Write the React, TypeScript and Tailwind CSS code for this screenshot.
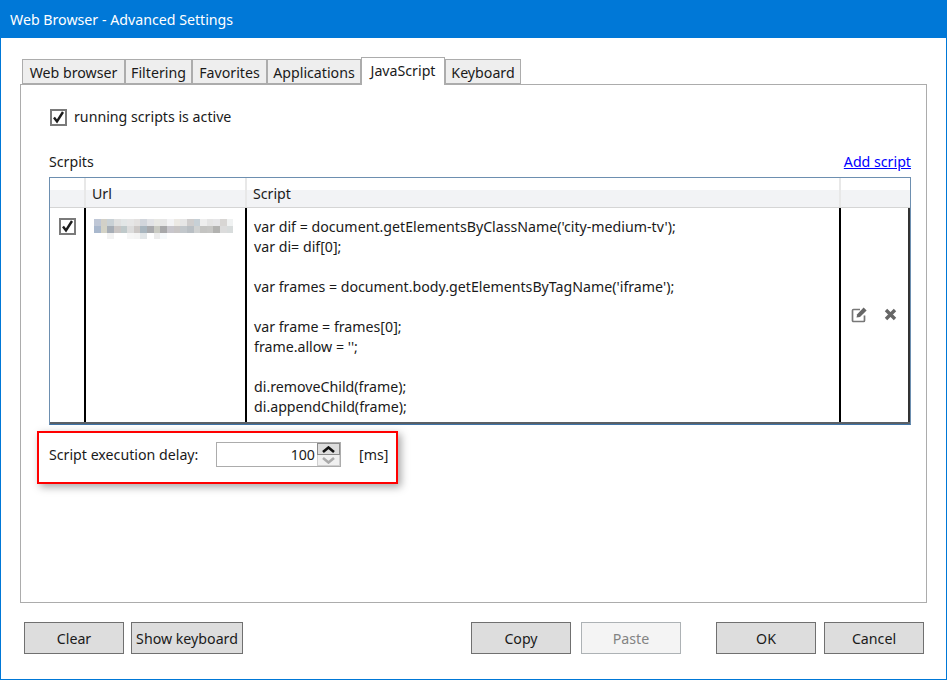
const F = "font-['Noto_Sans','Open_Sans',sans-serif]";

function Check() {
  return (
    <span className="flex h-[17px] w-[17px] items-center justify-center border-2 border-[#7a7a7a] bg-white">
      <svg width="13" height="13" viewBox="0 0 13 13" className="overflow-visible">
        <path d="M2 6.5 L5 10.5 L11 1" fill="none" stroke="#1c1c1c" strokeWidth="2.4" />
      </svg>
    </span>
  );
}

function Tab({ label, w, active }: { label: string; w: string; active?: boolean }) {
  return active ? (
    <div className={`${w} z-10 -mb-px flex h-[28px] items-center justify-center border border-b-0 border-[#acacac] bg-white text-[#1a1a1a]`}>
      <span className="-mt-[1px]">{label}</span>
    </div>
  ) : (
    <div className={`${w} flex h-[25px] items-center justify-center border border-[#acacac] bg-[#eeeeee] pt-[2px] text-[#1a1a1a]`}>
      {label}
    </div>
  );
}

function Btn({ label, w, disabled }: { label: string; w: string; disabled?: boolean }) {
  return (
    <div
      className={`${w} flex h-[32px] items-center justify-center border pt-[2px] ${
        disabled ? "border-[#adb2b5] bg-[#f4f4f4] text-[#838383]" : "border-[#707070] bg-[#dddddd] text-[#1a1a1a]"
      }`}
    >
      {label}
    </div>
  );
}

const row1 = ["#bfc7d6","#d2d0c8","#c9d1d6","#dfe0e0","#e2e6e6","#e6e6e6","#e3e1e0","#d2d6dc","#e2e3e6","#e8e8e4","#e6e6e6","#f3f3f5","#ece9e4","#e6e6e6","#cfcdcd","#c7d0d6","#eeeeee","#e4e4e4","#e6e6e8","#d8d6d4","#f0f2f2","#ffffff"];
const row2 = ["#a9b8cd","#d3d2c6","#a6adb6","#c9c5c4","#bfc9ca","#dcdcdc","#ccc8c6","#a9b6bf","#a9aaad","#c9cac2","#a8a8aa","#c8c6cc","#c8c5c5","#c2c7cb","#b9bfc4","#d0d2d2","#c4c4c2","#c6c6c4","#b2b2b0","#dcdcdc","#d8dcdc","#ffffff"];
const row3 = ["#ffffff","#ffffff","#f2f2f2","#ffffff","#ffffff","#f6f6f6","#f4f4f4","#e2e6e8","#ffffff","#ececec","#f6f9fb","#ffffff","#ffffff","#ffffff","#ffffff","#ffffff","#ffffff","#ffffff","#ffffff","#ffffff","#ffffff","#ffffff"];

export default function App() {
  return (
    <div className={`${F} flex h-[680px] w-[947px] flex-col border-x border-b border-[#0078d7] bg-white text-[14.2px] leading-[20px] text-[#1a1a1a]`}>
      <div className="-mx-px flex h-[38px] shrink-0 items-center bg-[#0078d7] pl-[10px] pt-[2px] text-white">
        Web Browser - Advanced Settings
      </div>

      <div className="flex flex-col px-[19px] pt-[19px]">
        <div className="flex items-end pl-[2px]">
          <Tab label="Web browser" w="w-[103px]" />
          <Tab label="Filtering" w="w-[67px]" />
          <Tab label="Favorites" w="w-[75px]" />
          <Tab label="Applications" w="w-[94px]" />
          <Tab label="JavaScript" w="w-[84px]" active />
          <Tab label="Keyboard" w="w-[76px]" />
        </div>

        <div className="flex h-[519px] flex-col border border-[#acacac] px-[28px]">
          <label className="ml-[1px] mt-[22px] flex items-center gap-[7px]">
            <Check />
            <span>running scripts is active</span>
          </label>

          <div className="mt-[25px] flex items-end justify-between">
            <span>Scrpits</span>
            <a className="mr-[-13px] text-[#0000ff] underline">Add script</a>
          </div>

          <div className="mt-[5px] flex w-[862px] flex-col border border-[#6d8fb0] border-b-[#3f74a8]">
            <div className="flex h-[30px] border-b border-[#d5d5d5] bg-[linear-gradient(#ffffff_0%,#ffffff_40%,#f2f3f5_40%,#f2f3f5_100%)]">
              <div className="w-[36px] border-r-2 border-[#e8e8e8]" />
              <div className="flex w-[161px] items-center border-r-2 border-[#e8e8e8] pl-[6px] pt-[2px]">Url</div>
              <div className="flex w-[594px] items-center border-r-2 border-[#e8e8e8] pl-[6px] pt-[2px]">Script</div>
              <div className="flex-1" />
            </div>
            <div className="flex h-[216px] border-b-2 border-[#5a6066]">
              <div className="flex w-[36px] justify-center border-r-2 border-black pt-[10px]">
                <Check />
              </div>
              <div className="w-[161px] border-r-2 border-black pl-[8px] pt-[11px]">
                <div className="grid w-[146px] grid-cols-[repeat(22,1fr)] blur-[0.6px]">
                  {row1.map((c, i) => (
                    <div key={i} className="h-[7px]" style={{ backgroundColor: c }} />
                  ))}
                  {row2.map((c, i) => (
                    <div key={i} className="h-[7px]" style={{ backgroundColor: c }} />
                  ))}
                  {row3.map((c, i) => (
                    <div key={i} className="h-[6px]" style={{ backgroundColor: c }} />
                  ))}
                </div>
              </div>
              <div className="flex w-[594px] flex-col justify-center whitespace-pre border-r-2 border-black pl-[7px] pt-[4px]">
                {`var dif = document.getElementsByClassName('city-medium-tv');
var di= dif[0];

var frames = document.body.getElementsByTagName('iframe');

var frame = frames[0];
frame.allow = '';

di.removeChild(frame);
di.appendChild(frame);`}
              </div>
              <div className="flex flex-1 items-center justify-center gap-[16px] border-r-2 border-[#333] pb-[1px] pr-[1px]">
                <svg width="17" height="17" viewBox="0 0 17 17">
                  <path d="M13.5 9.5 V14.5 Q13.5 15.5 12.5 15.5 H2.5 Q1.5 15.5 1.5 14.5 V4.5 Q1.5 3.5 2.5 3.5 H9" fill="none" stroke="#777" strokeWidth="1.7" />
                  <path d="M5.5 11.5 L6.2 8.2 L12.6 1.6 L15.6 4.4 L9 11 Z" fill="#666" />
                </svg>
                <svg width="13" height="13" viewBox="0 0 13 13">
                  <path d="M2 2 L11 11 M11 2 L2 11" fill="none" stroke="#666" strokeWidth="3.4" />
                </svg>
              </div>
            </div>
          </div>

          <div className="ml-[-12px] mt-[6px] flex h-[53px] w-[361px] items-center border-2 border-[#ff0000] pb-[6px] pl-[10px] shadow-[3px_3px_8px_rgba(0,0,0,0.35)]">
            <span className="w-[167px]">Script execution delay:</span>
            <div className="flex h-[25px] w-[125px] items-stretch border border-[#acacac]">
              <div className="flex flex-1 items-center justify-end pr-[2px]">100</div>
              <div className="flex w-[23px] flex-col">
                <div className="flex flex-1 items-center justify-center border border-[#8a8a8a] bg-[#dddddd]">
                  <svg width="13" height="7" viewBox="0 0 13 7">
                    <path d="M1 6 L6.5 1.5 L12 6" fill="none" stroke="#111" strokeWidth="2.6" />
                  </svg>
                </div>
                <div className="flex flex-1 items-center justify-center border border-t-0 border-[#cfcfcf] bg-[#f0f0f0]">
                  <svg width="13" height="7" viewBox="0 0 13 7">
                    <path d="M1 1 L6.5 5.5 L12 1" fill="none" stroke="#a9a9a9" strokeWidth="2.6" />
                  </svg>
                </div>
              </div>
            </div>
            <span className="ml-[18px]">[ms]</span>
          </div>
        </div>

        <div className="mt-[19px] flex pl-[4px] pr-[3px]">
          <Btn label="Clear" w="w-[100px]" />
          <div className="ml-[7px]"><Btn label="Show keyboard" w="w-[112px]" /></div>
          <div className="ml-[228px]"><Btn label="Copy" w="w-[100px]" /></div>
          <div className="ml-[10px]"><Btn label="Paste" w="w-[100px]" disabled /></div>
          <div className="ml-[35px]"><Btn label="OK" w="w-[100px]" /></div>
          <div className="ml-[8px]"><Btn label="Cancel" w="w-[100px]" /></div>
        </div>
      </div>
    </div>
  );
}
